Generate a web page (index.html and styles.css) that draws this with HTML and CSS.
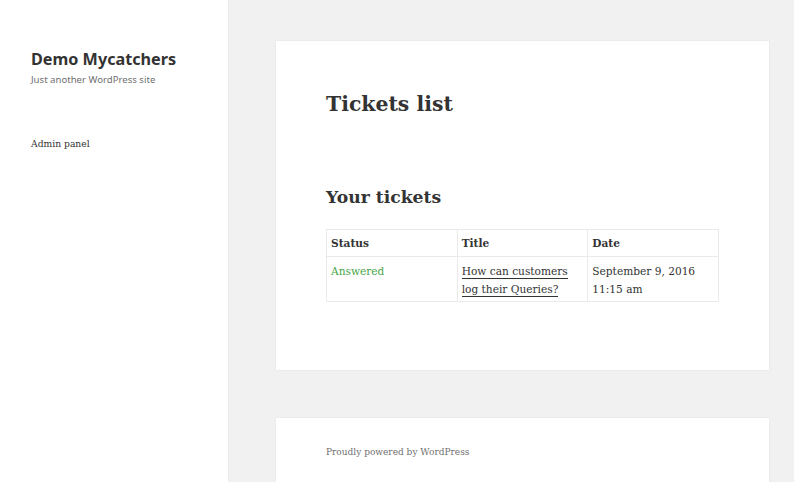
FILE: index.html
```html
<!DOCTYPE html>
<html lang="en">
<head>
    <meta charset="UTF-8">
    <meta name="viewport" content="width=device-width, initial-scale=1.0">
    <title>Tickets list – Demo Mycatchers</title>
    <link rel="stylesheet" href="styles.css">
</head>
<body>
    <div class="site">
        <aside class="sidebar">
            <p class="site-title">Demo Mycatchers</p>
            <p class="site-description">Just another WordPress site</p>
            <ul class="menu">
                <li><a href="#">Admin panel</a></li>
            </ul>
        </aside>
        <div class="content">
            <article class="card entry">
                <h1 class="entry-title">Tickets list</h1>
                <h2>Your tickets</h2>
                <table class="tickets">
                    <thead>
                        <tr>
                            <th>Status</th>
                            <th>Title</th>
                            <th>Date</th>
                        </tr>
                    </thead>
                    <tbody>
                        <tr>
                            <td class="answered">Answered</td>
                            <td><a href="#">How can customers log their Queries?</a></td>
                            <td>September 9, 2016 11:15 am</td>
                        </tr>
                    </tbody>
                </table>
            </article>
            <footer class="card site-footer">
                <p>Proudly powered by WordPress</p>
            </footer>
        </div>
    </div>
</body>
</html>
```
FILE: styles.css
```css
body {
    margin: 0;
    padding: 0;
    background: #f1f1f1;
    color: #333;
    font-family: "DejaVu Serif", "Liberation Serif", serif;
}

.site {
    display: flex;
    min-height: 482px;
}

.sidebar {
    width: 228px;
    flex-shrink: 0;
    background: #fff;
    box-shadow: 0 0 1px rgba(0, 0, 0, 0.15);
    padding: 46px 0 0 31px;
    box-sizing: border-box;
}

.site-title {
    margin: 0;
    font-family: "Noto Sans", "Open Sans", sans-serif;
    font-weight: 700;
    font-size: 16.2px;
    line-height: 26px;
    color: #333;
}

.site-description {
    margin: 0;
    font-family: "Noto Sans", "Open Sans", sans-serif;
    font-size: 9.6px;
    line-height: 16px;
    color: #707070;
}

.menu {
    list-style: none;
    margin: 46px 0 0;
    padding: 0;
    line-height: 16px;
}

.menu a {
    color: #333;
    text-decoration: none;
    font-size: 9.2px;
}

.content {
    flex: 1;
    padding: 41px 25px 0 48px;
}

.card {
    background: #fff;
    box-shadow: 0 0 1px rgba(0, 0, 0, 0.15);
}

.entry {
    padding: 47px 50px 68px;
}

.entry-title {
    margin: 0 0 64px;
    font-size: 20.4px;
    line-height: 32px;
    font-weight: 700;
    color: #333;
}

h2 {
    margin: 0 0 19px;
    font-size: 17.2px;
    line-height: 26px;
    font-weight: 700;
    color: #333;
}

.tickets {
    width: 100%;
    border-collapse: collapse;
    table-layout: fixed;
    font-size: 10.6px;
    line-height: 18px;
    border-top: 1px solid #eaeaea;
    border-left: 1px solid #eaeaea;
}

.tickets th,
.tickets td {
    text-align: left;
    vertical-align: top;
    border-right: 1px solid #eaeaea;
    border-bottom: 1px solid #eaeaea;
    padding: 5px 4px 3px;
}

.tickets th {
    font-weight: 700;
    padding: 4px 4px 4px;
}

.answered {
    color: #46a546;
}

.tickets a {
    color: #333;
    text-decoration: none;
    border-bottom: 1px solid #333;
    padding-bottom: 1px;
}

.site-footer {
    margin-top: 48px;
    padding: 26px 50px 30px;
}

.site-footer p {
    margin: 0;
    font-size: 9px;
    line-height: 16px;
    color: #707070;
}
```
